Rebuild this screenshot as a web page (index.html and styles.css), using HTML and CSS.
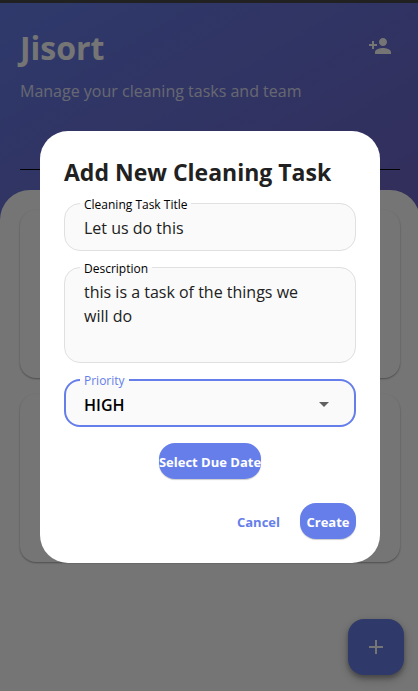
FILE: index.html
```html
<!DOCTYPE html>
<html lang="en">
<head>
<meta charset="utf-8">
<meta name="viewport" content="width=device-width, initial-scale=1">
<title>Jisort</title>
<link rel="stylesheet" href="styles.css">
</head>
<body>
<div class="app">
  <header class="header">
    <div class="header-row">
      <h1 class="brand">Jisort</h1>
      <button class="icon-button" type="button" aria-label="Add team member">
        <svg width="24" height="24" viewBox="0 0 24 24" fill="currentColor" aria-hidden="true"><path d="M15 12c2.21 0 4-1.79 4-4s-1.79-4-4-4-4 1.79-4 4 1.79 4 4 4zm-9-2V7H4v3H1v2h3v3h2v-3h3v-2H6zm9 4c-2.67 0-8 1.34-8 4v2h16v-2c0-2.66-5.33-4-8-4z"/></svg>
      </button>
    </div>
    <p class="tagline">Manage your cleaning tasks and team</p>
    <div class="divider"></div>
  </header>
  <main class="sheet">
    <article class="card"></article>
    <article class="card"></article>
  </main>
  <button class="fab" type="button" aria-label="Add task">
    <svg width="24" height="24" viewBox="0 0 24 24" fill="currentColor" aria-hidden="true"><path d="M19 13h-6v6h-2v-6H5v-2h6V5h2v6h6v2z"/></svg>
  </button>
  <div class="scrim">
    <form class="dialog" role="dialog" aria-labelledby="dialog-title">
      <h2 class="dialog-title" id="dialog-title">Add New Cleaning Task</h2>
      <fieldset class="field">
        <legend><label for="title">Cleaning Task Title</label></legend>
        <input class="control" id="title" type="text" value="Let us do this">
      </fieldset>
      <fieldset class="field">
        <legend><label for="description">Description</label></legend>
        <textarea class="control control-multiline" id="description">this is a task of the things we
will do</textarea>
      </fieldset>
      <fieldset class="field field-active">
        <legend><label for="priority">Priority</label></legend>
        <div class="select-wrap">
          <select class="control control-select" id="priority">
            <option>LOW</option>
            <option>MEDIUM</option>
            <option selected>HIGH</option>
          </select>
          <svg class="arrow" width="24" height="24" viewBox="0 0 24 24" fill="currentColor" aria-hidden="true"><path d="M7 10l5 5 5-5z"/></svg>
        </div>
      </fieldset>
      <button class="button button-filled button-date" type="button">Select Due Date</button>
      <div class="actions">
        <button class="button button-text" type="button">Cancel</button>
        <button class="button button-filled button-create" type="submit">Create</button>
      </div>
    </form>
  </div>
</div>
</body>
</html>
```
FILE: styles.css
```css
:root {
  --primary: #667eea;
  --outline: #e0e0e0;
  --fill: #fafafa;
}

* {
  box-sizing: border-box;
}

body {
  margin: 0;
  overflow: hidden;
  font-family: "Segoe UI", "Open Sans", "Noto Sans", sans-serif;
  border-top: 3px solid #212121;
}

button,
input,
textarea,
select {
  font-family: inherit;
}

h1,
h2,
p {
  margin: 0;
}

/* The app surface runs slightly past the right window edge. */
.app {
  position: relative;
  display: flex;
  flex-direction: column;
  min-height: calc(100vh - 3px);
  margin-right: -2px;
  background: linear-gradient(149deg, #667eea, #764ba2);
}

.header {
  padding: 24px 20px 20px;
  color: #fff;
}

.header-row {
  display: flex;
  align-items: flex-start;
  justify-content: space-between;
}

.brand {
  font-size: 32px;
  line-height: 42px;
  font-weight: 700;
}

.icon-button {
  display: flex;
  padding: 7px 8px;
  border: 0;
  background: none;
  color: inherit;
}

.tagline {
  margin-top: 10px;
  font-size: 16px;
  line-height: 24px;
  color: rgba(255, 255, 255, 0.8);
}

.divider {
  margin-top: 66px;
  height: 1px;
  background: #000;
}

.sheet {
  flex: 1;
  display: flex;
  flex-direction: column;
  gap: 16px;
  padding: 20px;
  border-radius: 30px 30px 0 0;
  background: #fff;
}

.card {
  height: 168px;
  border-radius: 16px;
  background: #fff;
  box-shadow: 0 1px 2px rgba(0, 0, 0, 0.35);
}

.fab {
  position: absolute;
  right: 16px;
  bottom: 16px;
  display: flex;
  align-items: center;
  justify-content: center;
  width: 56px;
  height: 56px;
  border: 0;
  border-radius: 16px;
  background: var(--primary);
  color: #fff;
  box-shadow: 0 3px 5px rgba(0, 0, 0, 0.3), 0 4px 12px rgba(0, 0, 0, 0.2);
}

.scrim {
  position: absolute;
  inset: 0;
  display: flex;
  align-items: center;
  justify-content: center;
  padding: 24px 40px;
  background: rgba(0, 0, 0, 0.54);
}

.dialog {
  display: flex;
  flex-direction: column;
  gap: 8px;
  width: 100%;
  max-width: 560px;
  padding: 24px;
  border-radius: 28px;
  background: #fff;
}

.dialog-title {
  padding-top: 2px;
  font-size: 23px;
  line-height: 30px;
  font-weight: 700;
  color: #212121;
  white-space: nowrap;
}

.field {
  min-width: 0;
  margin: 0;
  padding: 0 15px;
  border: 1px solid var(--outline);
  border-radius: 16px;
  background: var(--fill);
}

.field legend {
  padding: 2px 4px 0;
  font-size: 12px;
  line-height: 15px;
  color: #000;
}

.field-active {
  padding: 0 14px;
  border: 2px solid var(--primary);
}

.field-active legend {
  line-height: 16px;
  color: var(--primary);
}

.field label {
  display: block;
}

.control {
  display: block;
  width: 100%;
  height: 38px;
  padding: 4px 4px 10px;
  border: 0;
  outline: 0;
  background: none;
  font-size: 16px;
  line-height: 24px;
  color: #212121;
}

.control-multiline {
  height: 86px;
  resize: none;
  overflow: hidden;
}

.select-wrap {
  position: relative;
}

.control-select {
  height: 36px;
  padding: 4px 4px 8px;
  appearance: none;
  font-weight: 600;
  color: #000;
}

.arrow {
  position: absolute;
  top: 3px;
  right: 4px;
  color: #616161;
  pointer-events: none;
}

.button {
  height: 36px;
  padding: 2px 0 0;
  border: 0;
  border-radius: 16px;
  font-size: 13px;
  line-height: 20px;
  font-weight: 700;
  white-space: nowrap;
}

.button-filled {
  background: var(--primary);
  color: #fff;
  box-shadow: 0 1px 1px rgba(0, 0, 0, 0.2);
}

.button-date {
  align-self: center;
  margin-top: 8px;
}

.actions {
  display: flex;
  justify-content: flex-end;
  gap: 20px;
  margin-top: 16px;
}

.button-text {
  background: none;
  color: var(--primary);
}

.button-create {
  min-width: 56px;
}
```
